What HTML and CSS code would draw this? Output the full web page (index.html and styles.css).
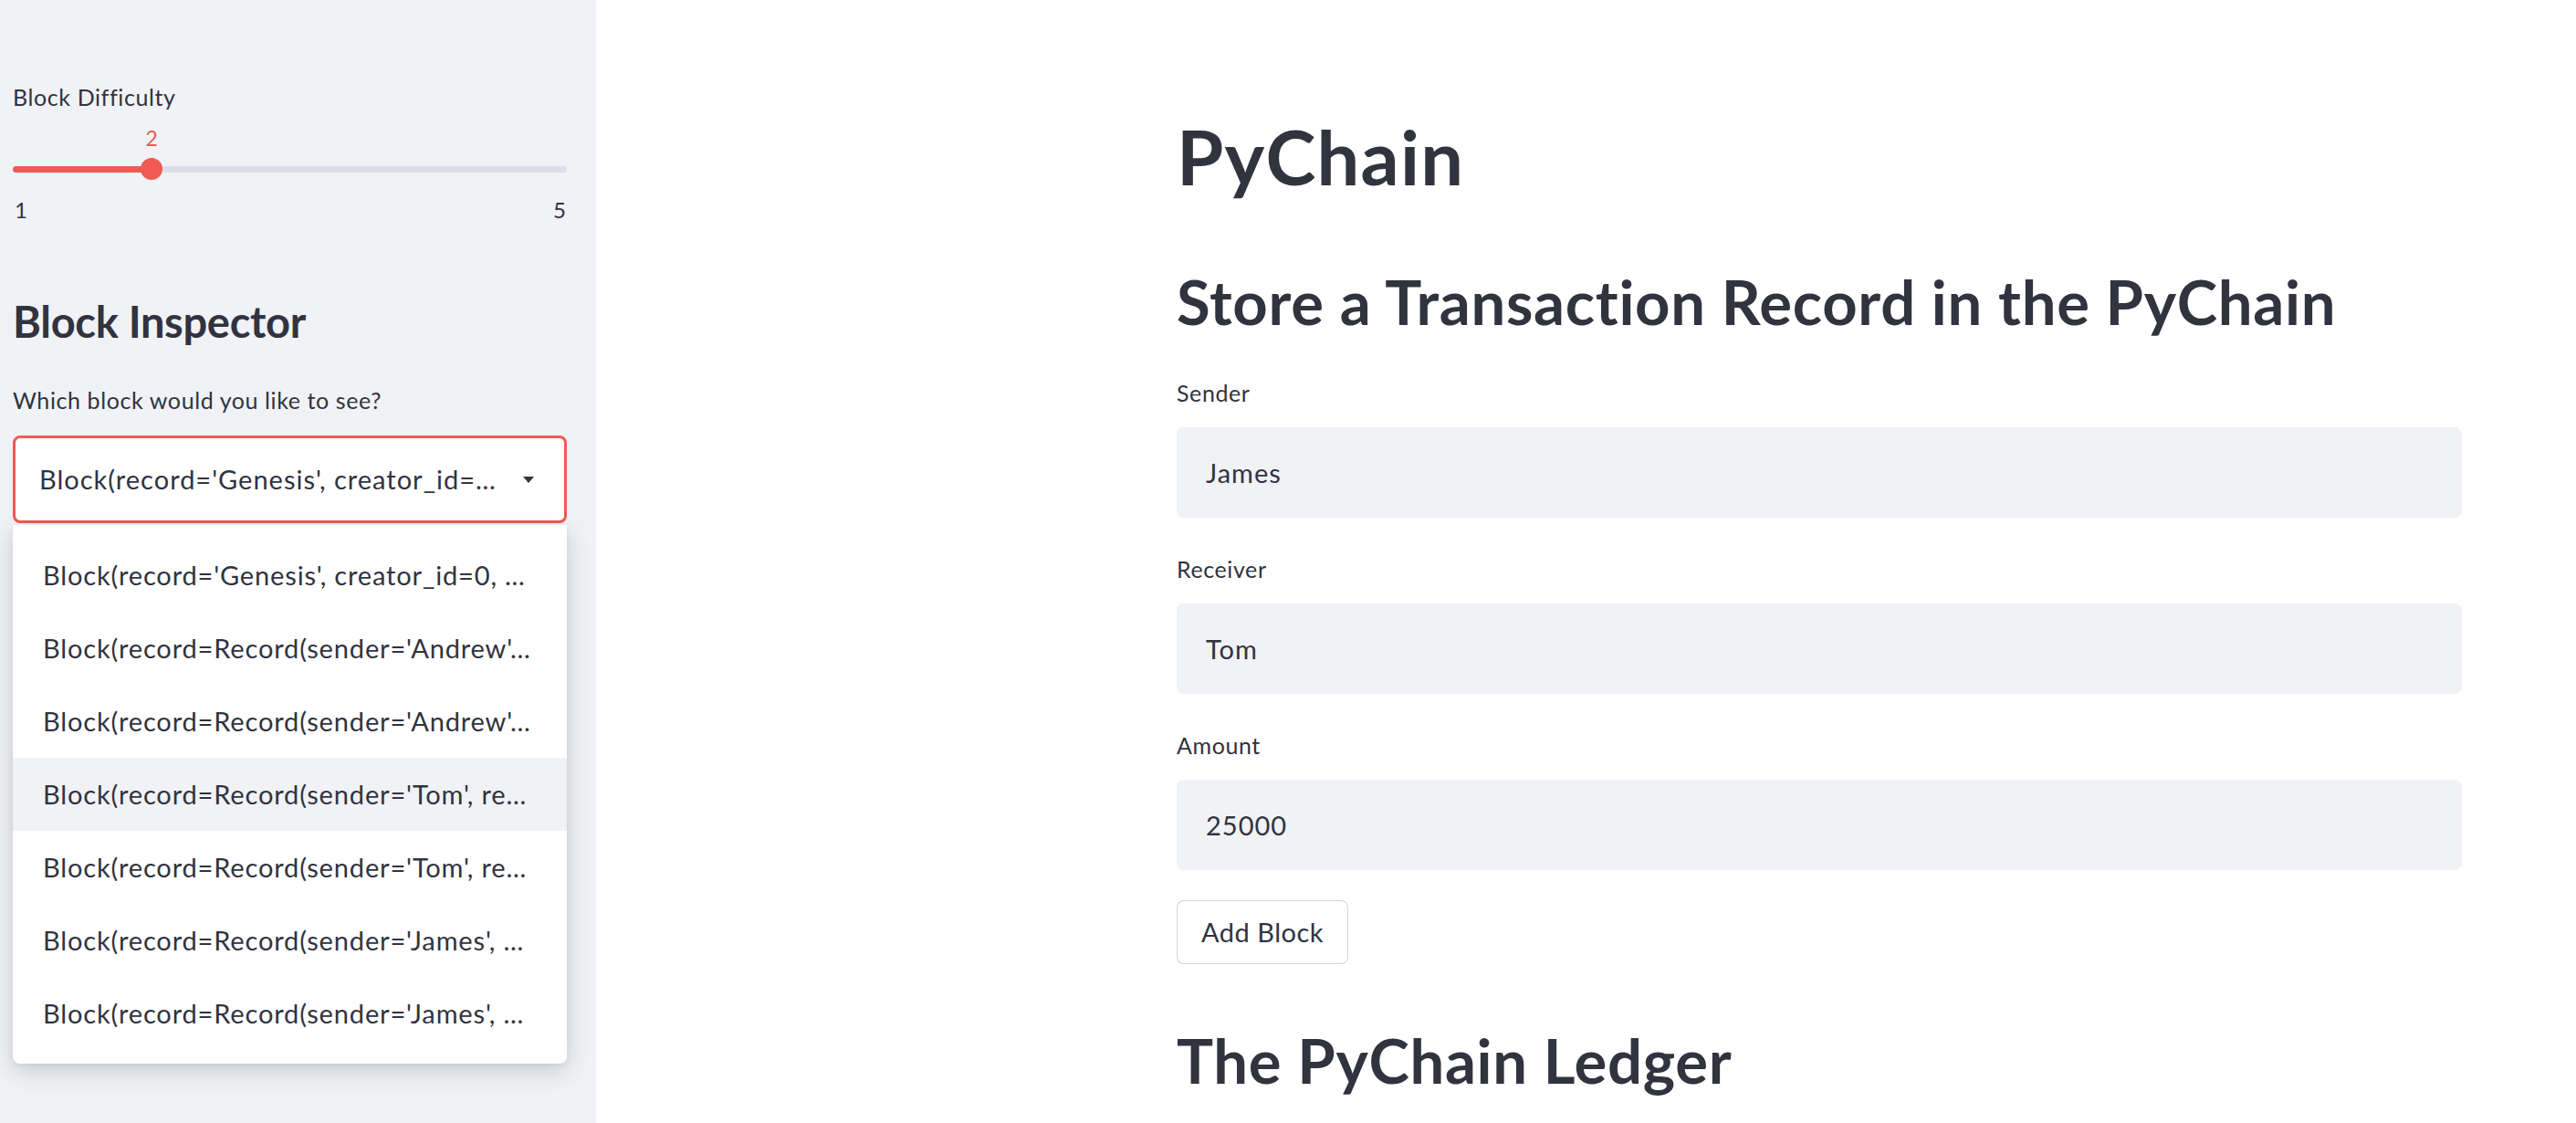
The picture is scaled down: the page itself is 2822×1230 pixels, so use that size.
FILE: index.html
```html
<!DOCTYPE html>
<html lang="en">
<head>
<meta charset="utf-8">
<title>PyChain</title>
<link rel="stylesheet" href="styles.css">
</head>
<body>
<div class="app">
  <aside class="sidebar">
    <div class="widget-label first">Block Difficulty</div>
    <div class="slider">
      <div class="slider-value-row"><span class="slider-value" style="left: 25%">2</span></div>
      <div class="slider-track-row">
        <div class="slider-track">
          <div class="slider-fill" style="width: 25%"></div>
          <div class="slider-thumb" style="left: 25%"></div>
        </div>
      </div>
      <div class="slider-ticks"><span>1</span><span>5</span></div>
    </div>

    <h2 class="sidebar-header">Block Inspector</h2>
    <div class="widget-label inspector-label">Which block would you like to see?</div>
    <div class="select">
      <span class="select-value">Block(record='Genesis', creator_id=…</span>
      <span class="select-arrow"></span>
    </div>
    <ul class="menu">
      <li class="menu-item">Block(record='Genesis', creator_id=0, …</li>
      <li class="menu-item">Block(record=Record(sender='Andrew'…</li>
      <li class="menu-item">Block(record=Record(sender='Andrew'…</li>
      <li class="menu-item active">Block(record=Record(sender='Tom', re…</li>
      <li class="menu-item">Block(record=Record(sender='Tom', re…</li>
      <li class="menu-item">Block(record=Record(sender='James', …</li>
      <li class="menu-item">Block(record=Record(sender='James', …</li>
    </ul>
  </aside>

  <main class="main">
    <div class="content">
      <h1 class="title">PyChain</h1>
      <h2 class="section-title">Store a Transaction Record in the PyChain</h2>

      <div class="widget-label field-label first-field">Sender</div>
      <div class="text-input">James</div>

      <div class="widget-label field-label">Receiver</div>
      <div class="text-input">Tom</div>

      <div class="widget-label field-label">Amount</div>
      <div class="text-input">25000</div>

      <button class="button">Add Block</button>

      <h2 class="section-title ledger">The PyChain Ledger</h2>
    </div>
  </main>
</div>
</body>
</html>
```

FILE: styles.css
```css
* {
  box-sizing: border-box;
}

html, body {
  margin: 0;
  padding: 0;
  height: 100%;
  overflow: hidden;
}

body {
  font-family: "Lato", "Source Sans Pro", "Liberation Sans", sans-serif;
  color: #31333f;
  background: #ffffff;
}

.app {
  display: flex;
  height: 100vh;
}

/* ---------- Sidebar ---------- */
.sidebar {
  flex: 0 0 653px;
  width: 653px;
  background: #f0f2f6;
  padding: 86px 32px 0 14px;
  display: flex;
  flex-direction: column;
}

.widget-label {
  font-size: 25px;
  line-height: 40px;
  height: 40px;
  letter-spacing: 0.6px;
  white-space: nowrap;
}

.slider {
  margin-top: 10px;
}

.slider-value-row {
  position: relative;
  height: 30px;
  margin: 0 1px;
}

.slider-value {
  position: absolute;
  top: 0;
  transform: translateX(-50%);
  font-size: 23px;
  line-height: 30px;
  color: #ef5a54;
}

.slider-track-row {
  margin-top: 7px;
  height: 24px;
  display: flex;
  align-items: center;
}

.slider-track {
  position: relative;
  width: 100%;
  height: 7px;
  border-radius: 4px;
  background: #dadee8;
}

.slider-fill {
  height: 100%;
  border-radius: 4px;
  background: #ef5a54;
}

.slider-thumb {
  position: absolute;
  top: 50%;
  width: 24px;
  height: 24px;
  border-radius: 50%;
  background: #ef5a54;
  transform: translate(-50%, -50%);
}

.slider-ticks {
  margin-top: 18px;
  display: flex;
  justify-content: space-between;
  font-size: 24px;
  line-height: 30px;
  padding: 0 1px 0 2px;
}

.sidebar-header {
  margin: 77px 0 0 0;
  font-size: 47px;
  line-height: 60px;
  font-weight: 700;
  letter-spacing: -0.3px;
}

.inspector-label {
  margin-top: 36px;
}

.select {
  margin-top: 19px;
  height: 96px;
  border: 3px solid #ef5a54;
  border-radius: 8px;
  background: #ffffff;
  display: flex;
  align-items: center;
  padding: 0 33px 0 26px;
}

.select-value {
  flex: 1;
  font-size: 29px;
  line-height: 40px;
  letter-spacing: 1px;
  white-space: nowrap;
  overflow: hidden;
}

.select-arrow {
  width: 0;
  height: 0;
  border-left: 6.5px solid transparent;
  border-right: 6.5px solid transparent;
  border-top: 7px solid #31333f;
}

.menu {
  list-style: none;
  margin: 2px 0 0 0;
  padding: 15px 0;
  background: #ffffff;
  border-radius: 0 0 8px 8px;
  box-shadow: 0 8px 28px rgba(0, 0, 0, 0.16), 0 2px 6px rgba(0, 0, 0, 0.06);
}

.menu-item {
  height: 80px;
  display: flex;
  align-items: center;
  padding: 0 10px 0 33px;
  font-size: 29px;
  line-height: 40px;
  letter-spacing: 0.85px;
  white-space: nowrap;
  overflow: hidden;
}

.menu-item.active {
  background: #f0f2f6;
}

/* ---------- Main ---------- */
.main {
  flex: 1;
  padding-left: 636px;
  padding-top: 121px;
}

.content {
  width: 1408px;
  display: flex;
  flex-direction: column;
  align-items: flex-start;
}

.title {
  margin: 0;
  font-size: 83px;
  line-height: 100px;
  font-weight: 700;
  letter-spacing: 1.2px;
}

.section-title {
  margin: 64px 0 0 0;
  font-size: 67px;
  line-height: 90px;
  font-weight: 700;
  letter-spacing: 0.7px;
  white-space: nowrap;
}

.field-label {
  margin-top: 36px;
}

.field-label.first-field {
  margin-top: 35px;
}

.text-input {
  margin-top: 18px;
  width: 100%;
  height: 99px;
  border-radius: 8px;
  background: #f0f2f6;
  display: flex;
  align-items: center;
  padding-left: 32px;
  font-size: 29px;
  line-height: 40px;
  letter-spacing: 1px;
}

.button {
  margin-top: 33px;
  width: 188px;
  height: 70px;
  border: 1.5px solid rgba(49, 51, 63, 0.2);
  border-radius: 8px;
  background: #ffffff;
  color: #31333f;
  font-family: inherit;
  font-size: 29px;
  line-height: 40px;
  letter-spacing: 0.5px;
  padding: 0;
  text-align: center;
}

.section-title.ledger {
  margin-top: 60px;
}
```
